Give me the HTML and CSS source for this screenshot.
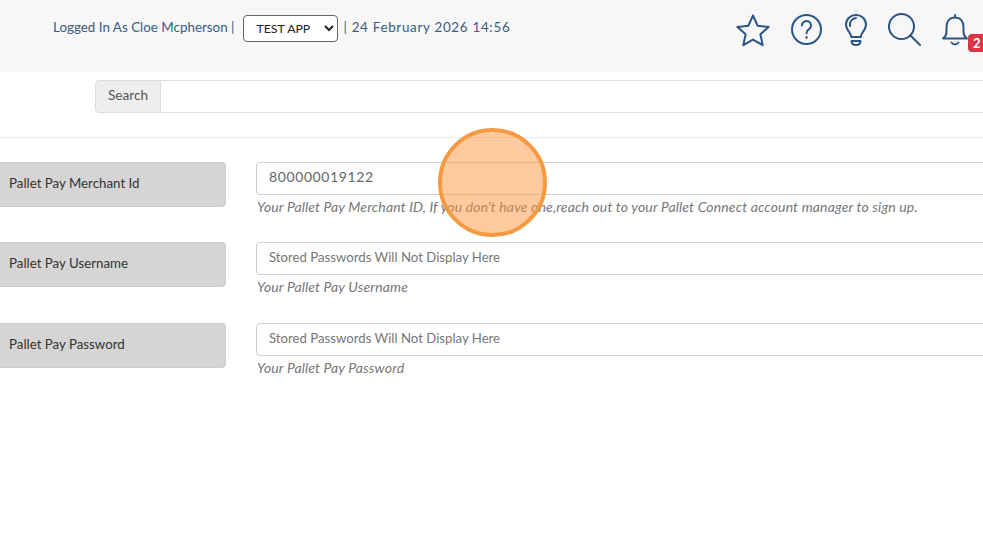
FILE: index.html
```html
<!DOCTYPE html>
<html lang="en">
<head>
<meta charset="utf-8">
<title>Pallet Pay Settings</title>
<link rel="stylesheet" href="styles.css">
</head>
<body>
<header class="topbar">
  <div class="status">
    <span class="status-user">Logged In As Cloe Mcpherson |</span>
    <select class="app-select"><option>TEST APP</option></select>
    <span class="status-date">| 24 February 2026 14:56</span>
  </div>
  <nav class="icons">
    <svg class="icon icon-star" viewBox="0 0 36 36"><path d="M18 2.500l4.600 10.200 11 1.200-8.200 7.400 2.300 10.900L18 26.600 8.300 32.200l2.300-10.900-8.200-7.400 11-1.200z"/></svg>
    <svg class="icon icon-help" viewBox="0 0 36 36"><circle cx="17.500" cy="17.500" r="14.500"/><path d="M13 13.500a4.500 4.500 0 1 1 7 3.700c-1.600 1.100-2.500 2-2.500 4"/><path class="dot" d="M17.500 25v1"/></svg>
    <svg class="icon icon-bulb" viewBox="0 0 28 36"><path d="M14 3C8.500 3 4 7 4 12.500c0 3.500 1.600 5.600 3.400 8 1.200 1.600 1.800 3 1.800 4.500h9.600c0-1.500.6-2.900 1.800-4.500 1.800-2.400 3.400-4.500 3.400-8C24 7 19.500 3 14 3z"/><path d="M8 14c-.8-4.500 2-7.500 6-8"/><path d="M9.500 29h9c0 2.500-2 4-4.500 4s-4.500-1.500-4.500-4z"/></svg>
    <svg class="icon icon-search" viewBox="0 0 36 36"><circle cx="14.500" cy="14.500" r="12.500"/><path d="M23.500 23.500L33 33"/></svg>
    <div class="bell-wrap">
      <svg class="icon icon-bell" viewBox="0 0 32 36"><path d="M15 3v2.500M15 5.500c-5.500 0-8.500 4-8.500 9.500v5c0 3-1.500 5-3.500 6.500h24c-2-1.500-3.500-3.500-3.500-6.500v-5c0-5.500-3-9.500-8.500-9.500z"/><path d="M11.500 30.500c2 2.500 5 2.500 7 0"/></svg>
      <span class="badge">2</span>
    </div>
  </nav>
</header>

<main class="content">
  <div class="search-group">
    <span class="search-label">Search</span>
    <input class="search-input" type="text" aria-label="Search">
  </div>
  <hr class="divider">
  <form class="settings">
    <div class="row">
      <label class="row-label">Pallet Pay Merchant Id</label>
      <div class="field">
        <input class="field-input" type="text" value="800000019122">
        <em class="hint">Your Pallet Pay Merchant ID, If you don't have one,reach out to your Pallet Connect account manager to sign up.</em>
      </div>
    </div>
    <div class="row">
      <label class="row-label">Pallet Pay Username</label>
      <div class="field">
        <input class="field-input" type="text" placeholder="Stored Passwords Will Not Display Here">
        <em class="hint">Your Pallet Pay Username</em>
      </div>
    </div>
    <div class="row">
      <label class="row-label">Pallet Pay Password</label>
      <div class="field">
        <input class="field-input" type="text" placeholder="Stored Passwords Will Not Display Here">
        <em class="hint">Your Pallet Pay Password</em>
      </div>
    </div>
  </form>
</main>
<div class="click-marker"></div>
</body>
</html>
```
FILE: styles.css
```css
* { box-sizing: border-box; }
html, body { margin: 0; height: 549px; overflow: hidden; }
body { font-family: "Lato", "Liberation Sans", sans-serif; font-size: 13.300px; color: #333; background: #fff; position: relative; width: 983px; }

.topbar { height: 72px; background: #f7f7f7; display: flex; align-items: flex-start; position: relative; }
.status { display: flex; align-items: center; margin: 15px 0 0 53px; font-size: 13.400px; color: #3a5c82; white-space: nowrap; }
.status-user, .status-date { padding-bottom: 3px; }
.status-date { letter-spacing: .7px; }
.app-select { width: 95px; height: 27px; margin: 0 5px 0 9px; font-family: inherit; font-size: 12.300px; color: #222; background: #fff; border: 1px solid #666; border-radius: 4px; padding-left: 8px; }

.icons { position: absolute; left: 735px; top: 12px; display: flex; align-items: flex-start; width: 260px; }
.icon { fill: none; stroke: #2b5585; stroke-width: 2; stroke-linecap: round; stroke-linejoin: round; display: block; }
.icon-star { width: 36px; height: 36px; margin-top: 1px; }
.icon-help { width: 36px; height: 36px; margin-left: 18px; }
.icon-bulb { width: 28px; height: 36px; margin-left: 17px; }
.icon-search { width: 36px; height: 36px; margin-left: 17px; }
.bell-wrap { position: relative; margin-left: 17px; }
.icon-bell { width: 32px; height: 36px; }
.badge { position: absolute; left: 28px; top: 22px; width: 24px; height: 18px; background: #dc3545; color: #fff; border-radius: 4px; font-size: 13px; font-weight: 700; padding-left: 5px; line-height: 18px; }

.content { width: 1400px; }
.search-group { display: flex; height: 33px; margin: 8px 0 0 95px; }
.search-label { width: 66px; background: #eee; border: 1px solid #ddd; border-radius: 4px 0 0 4px; padding-top: 6px; text-align: center; color: #555; font-size: 13.600px; }
.search-input { flex: 1; border: 1px solid #ddd; border-left: 0; background: #fff; }
.divider { margin: 24px 0 0; border: 0; border-top: 1px solid #e9e9e9; }

.settings { display: flex; flex-direction: column; margin-top: 24px; }
.row { display: flex; height: 80.400px; }
.row-label { width: 236px; height: 45px; margin-left: -10px; padding: 12px 0 0 18px; background: #d5d5d5; border: 1px solid #ccc; border-radius: 4px; color: #333; }
.field { margin-left: 30px; flex: 1; display: flex; flex-direction: column; }
.field-input { height: 33px; border: 1px solid #d0d0d0; border-radius: 4px; padding: 0 12px 4px; font-family: inherit; font-size: 14px; color: #666; letter-spacing: .6px; background: #fff; }
.field-input::placeholder { color: #777; opacity: 1; letter-spacing: 0; font-size: 13.200px; }
.hint { margin-top: 3px; padding-left: 1px; color: #777; font-size: 14px; letter-spacing: .14px; }

.click-marker { position: absolute; left: 438px; top: 128px; width: 109px; height: 109px; border-radius: 50%; background: rgba(250, 150, 60, .5); border: 4px solid #f59a42; }
```
